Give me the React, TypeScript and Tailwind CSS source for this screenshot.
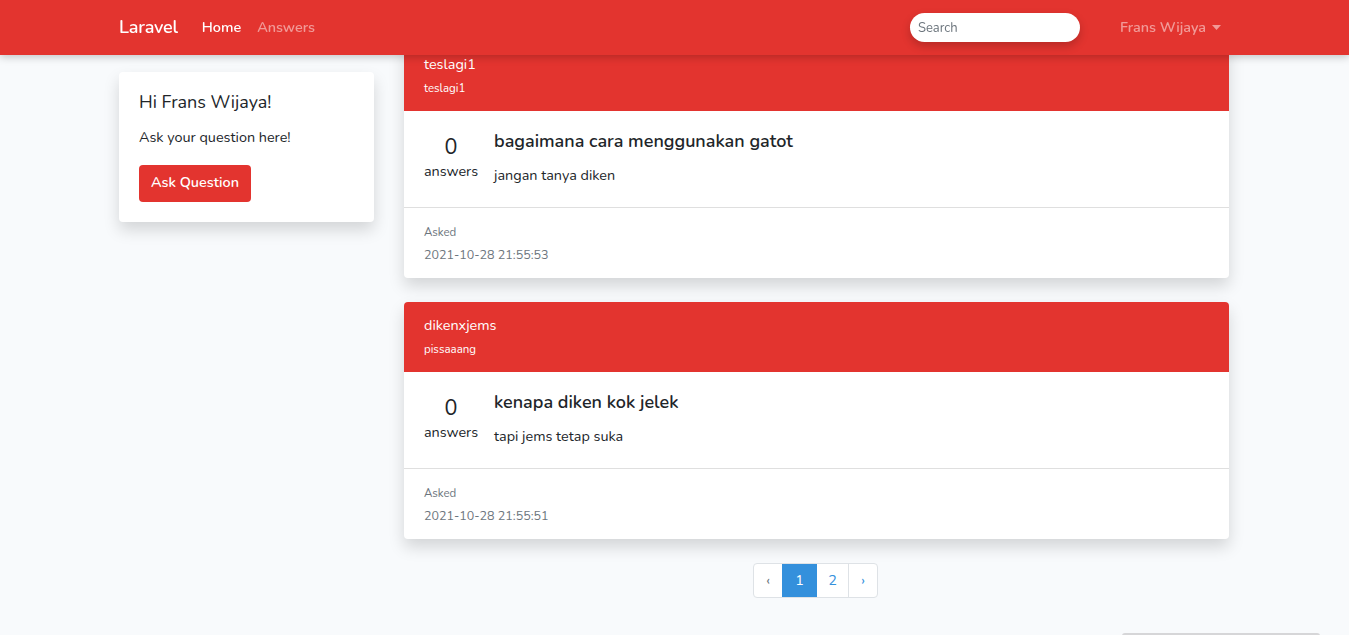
import React from "react";

interface Question {
  user: string;
  tag: string;
  count: number;
  title: string;
  body: string;
  asked: string;
}

const questions: Question[] = [
  {
    user: "teslagi1",
    tag: "teslagi1",
    count: 0,
    title: "bagaimana cara menggunakan gatot",
    body: "jangan tanya diken",
    asked: "2021-10-28 21:55:53",
  },
  {
    user: "dikenxjems",
    tag: "pissaaang",
    count: 0,
    title: "kenapa diken kok jelek",
    body: "tapi jems tetap suka",
    asked: "2021-10-28 21:55:51",
  },
];

function Navbar() {
  return (
    <nav className="fixed top-0 left-0 right-0 z-50 h-[55px] bg-[#e3342f] shadow-[0_2px_8px_rgba(0,0,0,0.22)]">
      <div className="ml-[104px] flex h-full w-[1140px] items-center px-[15px]">
        <a className="mr-4 text-[18px] font-semibold tracking-[-0.2px] text-white">Laravel</a>
        <a className="px-2 text-[14.4px] font-semibold text-white">Home</a>
        <a className="px-2 text-[14.4px] font-semibold text-white/50">Answers</a>
        <div className="ml-auto flex items-center">
          <input
            placeholder="Search"
            className="h-[29px] w-[170px] rounded-full bg-white px-2 text-[13px] text-[#495057] shadow-[0_4px_10px_rgba(0,0,0,0.2)] outline-none placeholder:text-[#6c757d]"
          />
          <a className="ml-8 flex items-center gap-[6px] px-2 text-[14.4px] font-semibold text-white/50">
            Frans Wijaya
            <svg width="9" height="5" viewBox="0 0 9 5">
              <path d="M0 0h9L4.5 5z" fill="currentColor" />
            </svg>
          </a>
        </div>
      </div>
    </nav>
  );
}

function QuestionCard({ q }: { q: Question }) {
  return (
    <div className="overflow-hidden rounded bg-white shadow-[0_0.5rem_1rem_rgba(0,0,0,0.15)]">
      <div className="bg-[#e3342f] px-5 pt-3 pb-[13px] text-white">
        <div className="text-[14.4px] leading-[23px]">{q.user}</div>
        <div className="mt-[3px] text-[11.5px] leading-[19px]">{q.tag}</div>
      </div>
      <div className="flex h-[96px] px-5 pt-5">
        <div className="flex w-[54px] flex-col items-center">
          <div className="pt-px text-[21.6px] leading-[30px]">{q.count}</div>
          <div className="text-[14.4px] leading-[19px]">answers</div>
        </div>
        <div className="ml-4">
          <h5 className="mb-[11px] text-[18px] font-semibold leading-[21.6px]">{q.title}</h5>
          <p className="text-[14.4px] leading-[23px]">{q.body}</p>
        </div>
      </div>
      <div className="border-t border-[#dfdfdf] px-5 pt-[14px] pb-3 text-[#6c757d]">
        <div className="text-[11.5px] leading-[20px]">Asked</div>
        <div className="mt-[1px] text-[12.5px] leading-[23px]">{q.asked}</div>
      </div>
    </div>
  );
}

function Pagination() {
  return (
    <ul className="mt-6 ml-[349px] flex h-[35px] w-fit overflow-hidden rounded border border-[#dee2e6] bg-white text-[14.4px]">
      <li className="flex w-[28px] items-center justify-center text-[#6c757d]">‹</li>
      <li className="flex w-[35px] items-center justify-center bg-[#3490dc] text-white">1</li>
      <li className="flex w-[32px] items-center justify-center border-r border-[#dee2e6] text-[#3490dc]">2</li>
      <li className="flex w-[28px] items-center justify-center text-[#3490dc]">›</li>
    </ul>
  );
}

export default function App() {
  return (
    <div className="min-h-screen bg-[#f8fafc] font-['Nunito','Open_Sans',sans-serif] text-[#212529]">
      <Navbar />
      <main className="ml-[104px] flex w-[1140px] items-start gap-[30px] px-[15px] pt-[41px]">
        <div className="mt-[31px] w-[255px] shrink-0 rounded bg-white p-5 shadow-[0_0.5rem_1rem_rgba(0,0,0,0.15)]">
          <h5 className="mb-3 text-[18px] leading-[21.6px]">Hi Frans Wijaya!</h5>
          <p className="mb-4 text-[14.4px] leading-[23px]">Ask your question here!</p>
          <button className="h-[37px] rounded bg-[#e3342f] px-3 text-[14.4px] font-semibold text-white">
            Ask Question
          </button>
        </div>
        <div className="flex w-[825px] flex-col">
          <div className="flex flex-col gap-6">
            {questions.map((q) => (
              <QuestionCard key={q.asked} q={q} />
            ))}
          </div>
          <Pagination />
        </div>
      </main>
      <div className="fixed left-[1122px] top-[633px] h-[3px] w-[198px] rounded-t bg-[#d6d6d8]" />
    </div>
  );
}
